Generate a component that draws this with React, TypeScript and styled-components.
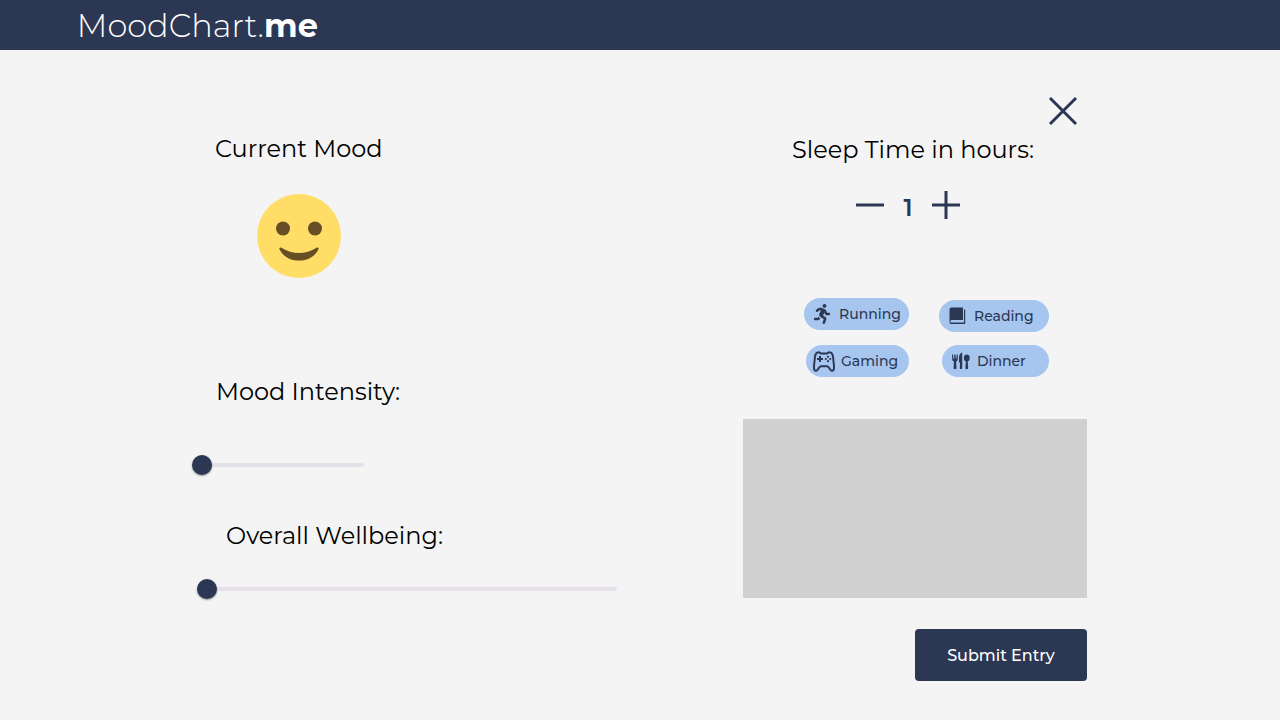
import React, { useState } from "react";
import styled, { createGlobalStyle } from "styled-components";
import { FaRunning } from "react-icons/fa";

const navy = "#2c3753";
const sans = `Montserrat, Inter, "Open Sans", sans-serif`;

const GlobalStyle = createGlobalStyle`
  *, *::before, *::after { box-sizing: border-box; }
  body { margin: 0; background: #f4f4f4; color: #000; font-family: ${sans}; }
  button, input, textarea { font-family: inherit; }
  h1, h2 { margin: 0; font-weight: 400; }
`;

const Header = styled.header`
  height: 50px;
  padding: 0 6%;
  display: flex;
  align-items: center;
  background: ${navy};
`;

const Logo = styled.h1`
  padding-top: 2px;
  color: #fff;
  font-size: 32px;
  line-height: 40px;
  font-weight: 300;
  white-space: nowrap;
  strong { font-weight: 700; }
`;

const Main = styled.main`
  display: flex;
  justify-content: space-between;
  gap: 32px;
  padding: 40px 15%;
`;

const MoodPanel = styled.section`
  padding-top: 43px;
`;

const DayPanel = styled.section`
  width: 344px;
  margin-right: 1px;
  display: flex;
  flex-direction: column;
`;

const Field = styled.div<{ $gap: number; $after?: number }>`
  display: flex;
  flex-direction: column;
  align-items: flex-start;
  gap: ${(p) => p.$gap}px;
  margin-bottom: ${(p) => p.$after ?? 0}px;
`;

const Title = styled.h2<{ $indent: number }>`
  padding-left: ${(p) => p.$indent}px;
  font-size: 24px;
  line-height: 32px;
  white-space: nowrap;
`;

const Face = styled.svg`
  width: 84px;
  height: 84px;
  margin-left: 65px;
`;

const Slider = styled.input<{ $width: number; $indent?: number }>`
  appearance: none;
  width: ${(p) => p.$width}px;
  height: 20px;
  margin: 0 0 0 ${(p) => p.$indent ?? 0}px;
  background: transparent;
  cursor: pointer;
  &::-webkit-slider-runnable-track {
    height: 4px;
    border-radius: 2px;
    background: #e6e0e9;
  }
  &::-webkit-slider-thumb {
    appearance: none;
    width: 20px;
    height: 20px;
    margin-top: -8px;
    border-radius: 50%;
    background: ${navy};
    box-shadow: 0 1px 2px rgba(0, 0, 0, 0.4);
  }
`;

const IconButton = styled.button`
  display: flex;
  padding: 0;
  border: 0;
  background: none;
  color: ${navy};
  cursor: pointer;
`;

const CloseButton = styled(IconButton)`
  align-self: flex-end;
  padding: 5px;
  margin: 0 3px 2px 0;
`;

const Stepper = styled.div`
  display: flex;
  align-items: center;
  gap: 18px;
  margin: 25px 0 79px 113px;
`;

const Hours = styled.output`
  width: 12px;
  padding-top: 6px;
  text-align: center;
  color: ${navy};
  font-size: 24px;
  line-height: 22px;
  font-weight: 600;
`;

const Activities = styled.div`
  display: flex;
  align-items: flex-end;
  gap: 30px;
  padding-left: 61px;
  margin-bottom: 42px;
`;

const ActivityColumn = styled.div<{ $gap: number }>`
  display: flex;
  flex-direction: column;
  align-items: flex-end;
  gap: ${(p) => p.$gap}px;
`;

const Chip = styled.button<{ $width: number; $pad: number; $gap: number }>`
  width: ${(p) => p.$width}px;
  height: 32px;
  padding: 0 0 0 ${(p) => p.$pad}px;
  display: flex;
  align-items: center;
  gap: ${(p) => p.$gap}px;
  border: 0;
  border-radius: 16px;
  background: #a6c6ef;
  color: ${navy};
  font-size: 14px;
  line-height: 20px;
  font-weight: 500;
  cursor: pointer;
`;

const Notes = styled.textarea`
  display: block;
  width: 100%;
  height: 179px;
  padding: 12px;
  margin-bottom: 31px;
  border: 0;
  border-radius: 0;
  background: #d0d0d0;
  resize: none;
`;

const Submit = styled.button`
  align-self: flex-end;
  width: 172px;
  height: 52px;
  border: 0;
  border-radius: 4px;
  background: ${navy};
  color: #fff;
  font-size: 16px;
  font-weight: 500;
  cursor: pointer;
`;

const BookIcon = () => (
  <svg width="17" height="18" viewBox="0 0 17 18" fill="currentColor" aria-hidden="true">
    <path d="M2.5 0.5H14V13H2.5Q1.5 13 1.5 14.2V15.5H15V2.5H16.2V17H2.2Q0.5 17 0.5 15V2.5Q0.5 0.5 2.5 0.5Z" />
  </svg>
);

const GamepadIcon = () => (
  <svg width="24" height="24" viewBox="0 0 24 24" fill="none" stroke="currentColor" strokeWidth="2" strokeLinejoin="round" aria-hidden="true">
    <path d="M6.5 3.2C7.8 3 8.3 4.6 9.5 4.6H14.5C15.7 4.6 16.2 3 17.5 3.2C19.5 3.4 20.6 5 21 7.5L22 17C22.3 20 21.5 21.8 20 21.8C18 21.8 17.3 17.3 15 17.3H9C6.7 17.3 6 21.8 4 21.8C2.5 21.8 1.7 20 2 17L3 7.5C3.4 5 4.5 3.4 6.5 3.2Z" />
    <path d="M8 7V13M5 10H11" />
    <g fill="currentColor" stroke="none">
      <circle cx="16" cy="7.8" r="1.1" />
      <circle cx="16" cy="12.2" r="1.1" />
      <circle cx="13.8" cy="10" r="1.1" />
      <circle cx="18.2" cy="10" r="1.1" />
    </g>
  </svg>
);

const CutleryIcon = () => (
  <svg width="18" height="18" viewBox="0 0 18 18" fill="currentColor" aria-hidden="true">
    <path d="M0 2.5H1L1.5 7H2L2.3 2.5H3.5L3.8 7H4.3L4.8 2.5H5.8V7.5Q5.8 9 4.2 9.5L4.5 16.5Q3 18 1.6 16.5L1.9 9.5Q0.2 9 0.2 7.5Z" />
    <path d="M10.2 0.5V16.5Q9 18 7.8 16.5L8 10.5H7V5Q7.5 1 10.2 0.5Z" />
    <ellipse cx="14.8" cy="6" rx="2.9" ry="3.6" />
    <path d="M14 8H15.6L16.2 16.5Q14.8 18 13.4 16.5Z" />
  </svg>
);

export default function App() {
  const [hours, setHours] = useState(1);
  return (
    <>
      <GlobalStyle />
      <Header>
        <Logo>MoodChart.<strong>me</strong></Logo>
      </Header>
      <Main>
        <MoodPanel>
          <Field $gap={29} $after={98}>
            <Title $indent={23}>Current Mood</Title>
            <Face viewBox="0 0 84 84" role="img" aria-label="Slightly happy">
              <circle cx="42" cy="42" r="42" fill="#ffdd67" />
              <circle cx="26" cy="34.5" r="7" fill="#664e27" />
              <circle cx="58" cy="34.5" r="7" fill="#664e27" />
              <path d="M24 53.4Q42 64.5 60 53.4Q62.4 53.2 61.4 55.5C58 62.6 50.5 66.6 42 66.6S26 62.6 22.6 55.5Q21.6 53.2 24 53.4Z" fill="#664e27" />
            </Face>
          </Field>
          <Field $gap={47} $after={45}>
            <Title as="label" htmlFor="intensity" $indent={24}>Mood Intensity:</Title>
            <Slider id="intensity" type="range" defaultValue={0} $width={172} />
          </Field>
          <Field $gap={27}>
            <Title as="label" htmlFor="wellbeing" $indent={34}>Overall Wellbeing:</Title>
            <Slider id="wellbeing" type="range" defaultValue={0} $width={420} $indent={5} />
          </Field>
        </MoodPanel>
        <DayPanel>
          <CloseButton aria-label="Close">
            <svg width="32" height="32" viewBox="0 0 32 32" stroke="currentColor" strokeWidth="3" aria-hidden="true">
              <path d="M3 3L29 29M29 3L3 29" />
            </svg>
          </CloseButton>
          <Title $indent={49}>Sleep Time in hours:</Title>
          <Stepper>
            <IconButton aria-label="Fewer hours" onClick={() => setHours(Math.max(0, hours - 1))}>
              <svg width="28" height="28" viewBox="0 0 28 28" stroke="currentColor" strokeWidth="3" aria-hidden="true">
                <path d="M0 14H28" />
              </svg>
            </IconButton>
            <Hours>{hours}</Hours>
            <IconButton aria-label="More hours" onClick={() => setHours(hours + 1)}>
              <svg width="28" height="28" viewBox="0 0 28 28" stroke="currentColor" strokeWidth="3" aria-hidden="true">
                <path d="M0 14H28M14 0V28" />
              </svg>
            </IconButton>
          </Stepper>
          <Activities>
            <ActivityColumn $gap={15}>
              <Chip $width={105} $pad={8} $gap={7}><FaRunning size={20} />Running</Chip>
              <Chip $width={103} $pad={6} $gap={5}><GamepadIcon />Gaming</Chip>
            </ActivityColumn>
            <ActivityColumn $gap={13}>
              <Chip $width={110} $pad={10} $gap={8}><BookIcon />Reading</Chip>
              <Chip $width={107} $pad={10} $gap={7}><CutleryIcon />Dinner</Chip>
            </ActivityColumn>
          </Activities>
          <Notes aria-label="Notes" />
          <Submit>Submit Entry</Submit>
        </DayPanel>
      </Main>
    </>
  );
}
